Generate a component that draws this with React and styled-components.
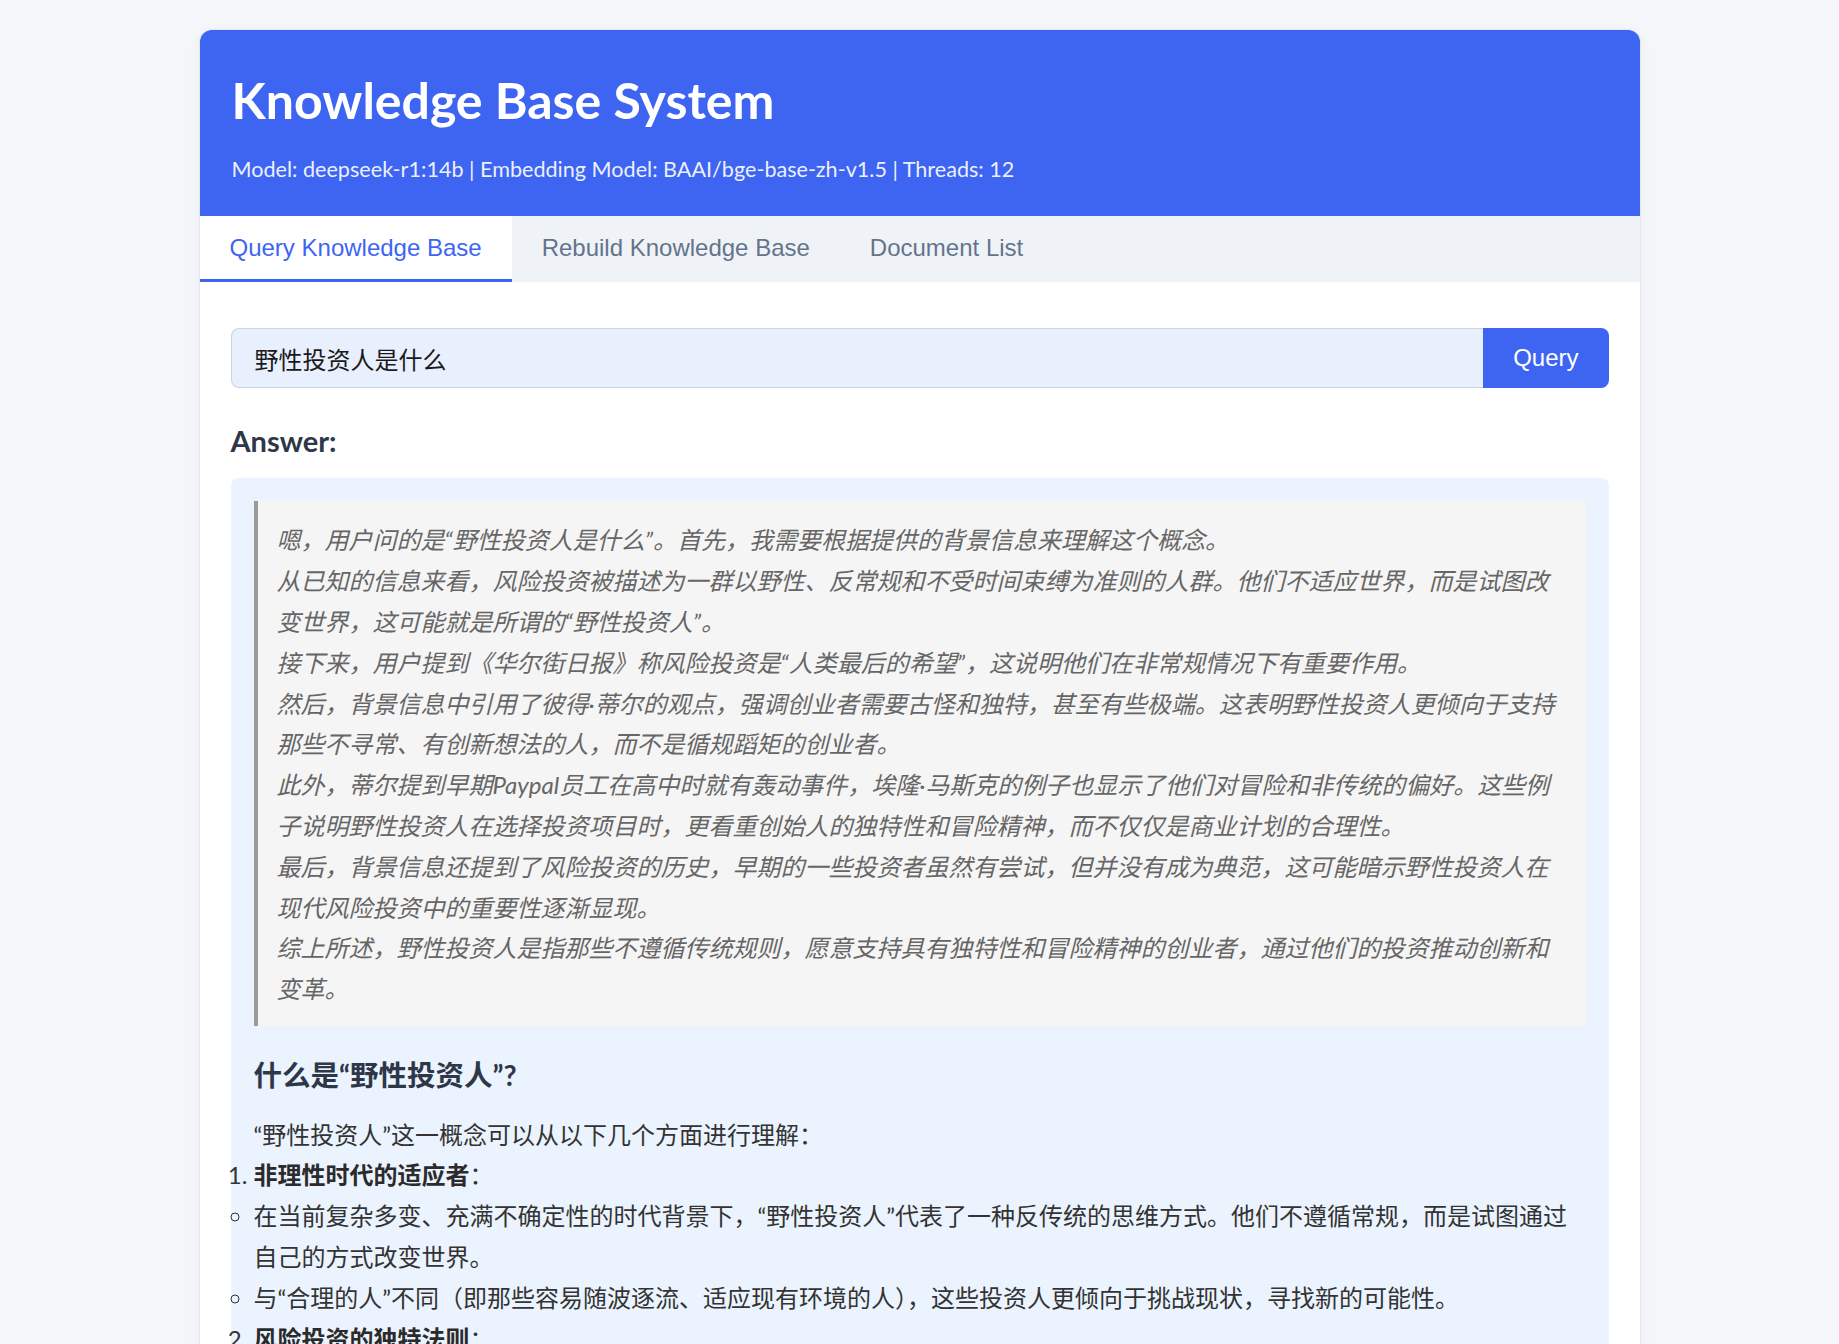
import React, { useState } from "react";
import styled, { createGlobalStyle, css } from "styled-components";

const GlobalStyle = createGlobalStyle`
	* {
		box-sizing: border-box;
	}
	body {
		margin: 0;
		background: #f4f6fa;
		font-family: "Lato", "Noto Sans CJK SC", sans-serif;
	}
`;

const Page = styled.div`
	padding: 30px 0 40px;
`;

const Card = styled.div`
	width: 1440px;
	margin: 0 auto;
	background: #fff;
	border-radius: 12px;
	overflow: hidden;
	box-shadow: 0 0 0 1px #e3e8ef, 0 4px 14px rgba(15, 23, 42, 0.05);
`;

const Header = styled.header`
	background: #3e65f2;
	color: #fff;
	padding: 40px 32px 32px;
`;

const Title = styled.h1`
	margin: 0 0 25px;
	font-size: 50px;
	font-weight: 700;
	line-height: 1.2;
`;

const Meta = styled.p`
	margin: 0;
	font-size: 21.6px;
	line-height: 28.8px;
	color: rgba(255, 255, 255, 0.92);
`;

const TabBar = styled.nav`
	display: flex;
	background: #eff3f8;
`;

const Tab = styled.button`
	font-family: "Liberation Sans", Arial, sans-serif;
	font-size: 24px;
	line-height: 27.6px;
	padding: 18px 30px;
	border: 0;
	border-bottom: 3px solid transparent;
	background: transparent;
	color: #64748b;
	cursor: pointer;
	${props => props.active && css`
		background: #fff;
		color: #3e65f2;
		border-bottom-color: #3e65f2;
	`}
`;

const Panel = styled.main`
	padding: 46px 31px 40px;
`;

const QueryForm = styled.form`
	display: flex;
	height: 60px;
`;

const QueryInput = styled.input`
	flex: 1;
	height: 60px;
	padding: 0 23px;
	border: 1px solid #cbd5e1;
	border-right: 0;
	border-radius: 8px 0 0 8px;
	background: #e8effd;
	color: #1a1a1a;
	font-family: "Lato", "Noto Sans CJK SC", sans-serif;
	font-size: 24px;
	outline: none;
`;

const QueryButton = styled.button`
	padding: 0 30px;
	border: 0;
	border-radius: 0 8px 8px 0;
	background: #3e65f2;
	color: #fff;
	font-family: "Liberation Sans", Arial, sans-serif;
	font-size: 24px;
	cursor: pointer;
`;

const AnswerLabel = styled.h3`
	margin: 36px 0 20px;
	font-size: 29px;
	line-height: 34px;
	font-weight: 700;
	color: #2d3748;
`;

const AnswerBox = styled.div`
	background: #ebf3fe;
	border-radius: 8px;
	padding: 23px 23px 30px;
	color: #333;
	font-size: 24px;
	line-height: 1.7;
`;

const Thinking = styled.blockquote`
	margin: 0;
	padding: 19px 22px 16px 19px;
	border-left: 4px solid #9a9a9a;
	background: #f5f5f5;
	color: #666;
	font-style: italic;
	p {
		margin: 0;
	}
`;

const Heading = styled.h3`
	margin: 26px 0 15px;
	font-size: 28.5px;
	line-height: 47.6px;
	font-weight: 700;
	color: #2d3748;
`;

const Paragraph = styled.p`
	margin: 0;
`;

const NumberList = styled.ol`
	margin: 0;
	padding-left: 0;
	strong {
		font-weight: 700;
		color: #2b2b2b;
	}
`;

const BulletList = styled.ul`
	margin: 0;
	padding-left: 0;
`;

const thoughts = [
	"嗯，用户问的是“野性投资人是什么”。首先，我需要根据提供的背景信息来理解这个概念。",
	"从已知的信息来看，风险投资被描述为一群以野性、反常规和不受时间束缚为准则的人群。他们不适应世界，而是试图改变世界，这可能就是所谓的“野性投资人”。",
	"接下来，用户提到《华尔街日报》称风险投资是“人类最后的希望”，这说明他们在非常规情况下有重要作用。",
	"然后，背景信息中引用了彼得·蒂尔的观点，强调创业者需要古怪和独特，甚至有些极端。这表明野性投资人更倾向于支持那些不寻常、有创新想法的人，而不是循规蹈矩的创业者。",
	"此外，蒂尔提到早期Paypal员工在高中时就有轰动事件，埃隆·马斯克的例子也显示了他们对冒险和非传统的偏好。这些例子说明野性投资人在选择投资项目时，更看重创始人的独特性和冒险精神，而不仅仅是商业计划的合理性。",
	"最后，背景信息还提到了风险投资的历史，早期的一些投资者虽然有尝试，但并没有成为典范，这可能暗示野性投资人在现代风险投资中的重要性逐渐显现。",
	"综上所述，野性投资人是指那些不遵循传统规则，愿意支持具有独特性和冒险精神的创业者，通过他们的投资推动创新和变革。",
];

const points = [
	{
		title: "非理性时代的适应者",
		items: [
			"在当前复杂多变、充满不确定性的时代背景下，“野性投资人”代表了一种反传统的思维方式。他们不遵循常规，而是试图通过自己的方式改变世界。",
			"与“合理的人”不同（即那些容易随波逐流、适应现有环境的人），这些投资人更倾向于挑战现状，寻找新的可能性。",
		],
	},
	{
		title: "风险投资的独特法则",
		items: [
			"风险投资遵循幂律法则，少数极其成功的项目带来绝大部分回报，因此投资人愿意押注看似疯狂的想法。",
			"他们看重创始人的独特性和冒险精神，而不仅仅是商业计划的合理性。",
		],
	},
];

const tabs = ["Query Knowledge Base", "Rebuild Knowledge Base", "Document List"];

const App = () => {
	const [activeTab, setActiveTab] = useState(0);
	const [question, setQuestion] = useState("野性投资人是什么");

	return (
		<>
			<GlobalStyle />
			<Page>
				<Card>
					<Header>
						<Title>Knowledge Base System</Title>
						<Meta>Model: deepseek-r1:14b | Embedding Model: BAAI/bge-base-zh-v1.5 | Threads: 12</Meta>
					</Header>
					<TabBar>
						{tabs.map((tab, index) => (
							<Tab key={tab} active={activeTab === index} onClick={() => setActiveTab(index)}>
								{tab}
							</Tab>
						))}
					</TabBar>
					<Panel>
						<QueryForm onSubmit={e => e.preventDefault()}>
							<QueryInput value={question} onChange={e => setQuestion(e.target.value)} />
							<QueryButton type="submit">Query</QueryButton>
						</QueryForm>
						<AnswerLabel>Answer:</AnswerLabel>
						<AnswerBox>
							<Thinking>
								{thoughts.map((line, index) => (
									<p key={index}>{line}</p>
								))}
							</Thinking>
							<Heading>什么是“野性投资人”?</Heading>
							<Paragraph>“野性投资人”这一概念可以从以下几个方面进行理解：</Paragraph>
							<NumberList>
								{points.map(point => (
									<li key={point.title}>
										<strong>{point.title}</strong>：
										<BulletList>
											{point.items.map((item, index) => (
												<li key={index}>{item}</li>
											))}
										</BulletList>
									</li>
								))}
							</NumberList>
						</AnswerBox>
					</Panel>
				</Card>
			</Page>
		</>
	);
};

export default App;
